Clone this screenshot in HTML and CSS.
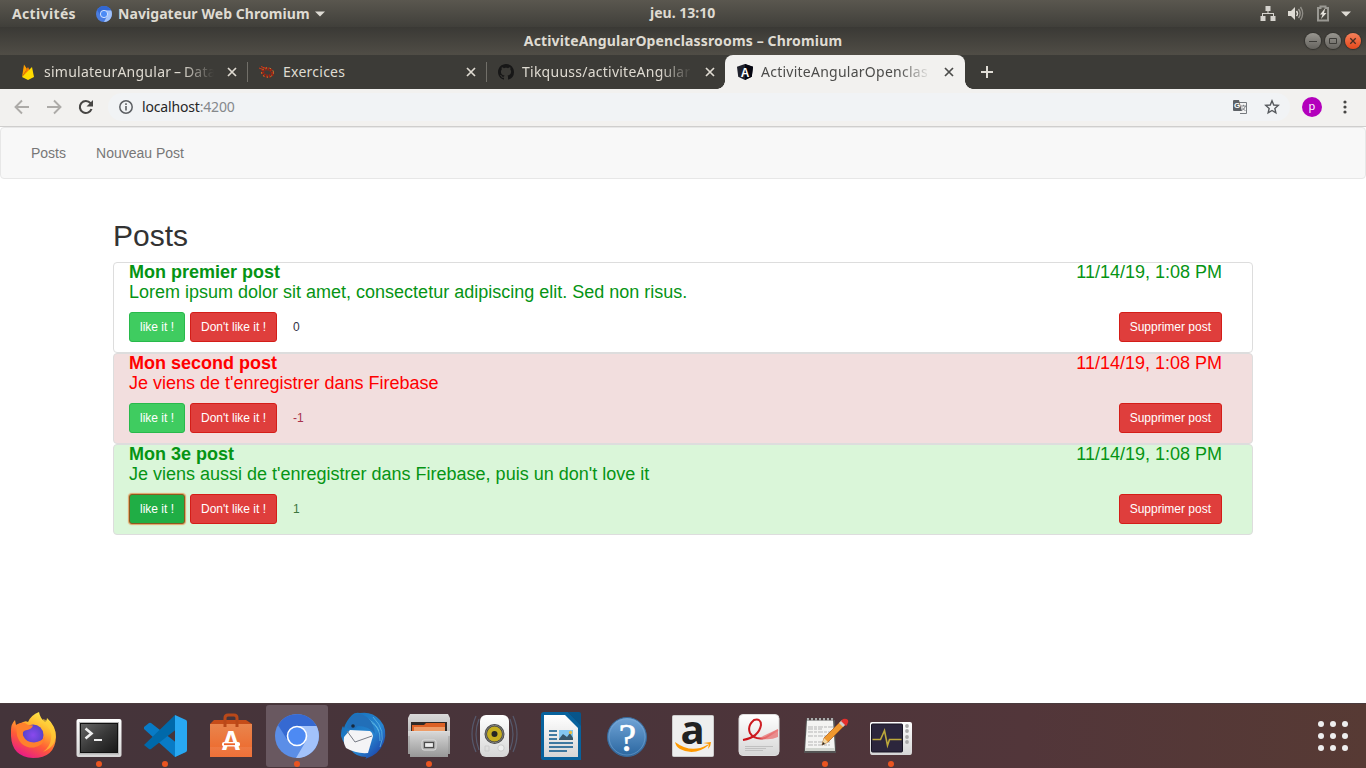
FILE: index.html
```html
<!DOCTYPE html>
<html lang="fr">
<head>
<meta charset="utf-8">
<title>ActiviteAngularOpenclassrooms</title>
<link rel="stylesheet" href="styles.css">
</head>
<body>
<header class="panel">
  <div class="panel-left">
    <span class="activities">Activités</span>
    <svg class="app-icon" width="16" height="16" viewBox="0 0 44 44"><circle cx="22" cy="22" r="22" fill="#4a7de0"/><path d="M22 12H41.500A22 22 0 0 1 22 44L30.700 27Z" fill="#a1c2fa"/><path d="M3 11A22 22 0 0 1 41.500 12H22L13 27Z" fill="#3267d1"/><circle cx="22" cy="22" r="10" fill="#4c8bf5" stroke="#dce8ff" stroke-width="2.500"/></svg>
    <span class="app-name">Navigateur Web Chromium</span>
    <svg width="10" height="6" viewBox="0 0 10 6"><path d="M0 .5H10L5 5.500Z" fill="#dedbd4"/></svg>
  </div>
  <span class="clock">jeu. 13:10</span>
  <div class="panel-right">
    <svg width="16" height="16" viewBox="0 0 16 16"><g fill="#d5d3ce"><path d="M5.500 0h5v5h-5zM.5 10h5v5h-5zM10.500 10h5v5h-5z"/><path d="M7.500 5h1v2H14v3h-1V8H3v2H2V7h5.500z"/></g></svg>
    <svg width="16" height="16" viewBox="0 0 16 16"><path d="M0 5h3l4-4v13l-4-4H0z" fill="#dedbd4"/><g fill="none" stroke="#dedbd4"><path d="M8.500 5q2 2.500 0 5" stroke-width="1.500"/><path d="M10.500 3q3.300 4.500 0 9" stroke-width="1.500" opacity=".55"/><path d="M12.500 1q4.300 6.500 0 13" opacity=".45" stroke-width="1.400"/></g></svg>
    <svg class="battery" width="14" height="17" viewBox="0 0 14 17"><path d="M2 3H4.500V1.500h5V3H12V15.500H2Z" fill="none" stroke="#999892" stroke-width="2"/><path d="M8.500 4 4 9.500H6.500L5 14l5.500-6H8L9 4z" fill="#e5e2dc"/></svg>
    <svg width="10" height="6" viewBox="0 0 10 6"><path d="M0 .5H10L5 5.500Z" fill="#dedbd4"/></svg>
  </div>
</header>

<div class="titlebar">
  <span class="window-title">ActiviteAngularOpenclassrooms – Chromium</span>
  <div class="window-buttons">
    <span class="wbtn"><svg viewBox="0 0 16 16"><path d="M4 8.500h8" stroke="#3d3c38"/></svg></span>
    <span class="wbtn"><svg viewBox="0 0 16 16"><path d="M4.500 5.500h7v5h-7z" fill="none" stroke="#3d3c38"/></svg></span>
    <span class="wbtn wbtn-close"><svg viewBox="0 0 16 16"><path d="m5.300 5.300 5.400 5.400m0-5.400-5.400 5.400" stroke="#482d22" stroke-width="1.300"/></svg></span>
  </div>
</div>

<nav class="tabs">
  <div class="tab tab-first">
    <svg width="16" height="16" viewBox="0 0 16 16"><path d="M2 13 4 .5 7 5z" fill="#ffa000"/><path d="M2 13 8 3l2 4z" fill="#f57c00"/><path d="m2 13 10-10 2 10-6 3z" fill="#ffdb00"/></svg>
    <span class="tab-title fade">simulateurAngular – Data</span>
    <svg class="close" viewBox="0 0 8 8"><path d="m0 0 8 8m0-8L0 8"/></svg>
  </div>
  <div class="tab tab-line">
    <svg width="16" height="16" viewBox="0 0 16 16"><ellipse cx="8.500" cy="8.500" rx="5" ry="3.600" transform="rotate(15 8.500 8.500)" fill="none" stroke="#a32312" stroke-width="3.200" stroke-dasharray="1.800 .9"/><ellipse cx="8.500" cy="8.500" rx="6" ry="4.600" fill="none" stroke="#e8a33a" stroke-width="1" stroke-dasharray="1.200 2.600"/><path d="M0 4 4 5.500M2 2.500l5 2" stroke="#d33a18"/></svg>
    <span class="tab-title">Exercices</span>
    <svg class="close" viewBox="0 0 8 8"><path d="m0 0 8 8m0-8L0 8"/></svg>
  </div>
  <div class="tab tab-line">
    <svg width="16" height="16" viewBox="0 0 16 16"><path fill="#171717" d="M8 0C3.580 0 0 3.580 0 8c0 3.540 2.290 6.530 5.470 7.590.4.070.55-.17.55-.38 0-.19-.01-.82-.01-1.490-2.010.37-2.530-.49-2.690-.94-.09-.23-.48-.94-.82-1.130-.28-.15-.68-.52-.01-.53.63-.01 1.080.58 1.230.82.72 1.210 1.870.87 2.330.66.07-.52.28-.87.51-1.070-1.780-.2-3.640-.89-3.640-3.950 0-.87.31-1.590.82-2.150-.08-.2-.36-1.020.08-2.120 0 0 .67-.21 2.200.82.64-.18 1.320-.27 2-.27s1.360.09 2 .27c1.530-1.040 2.200-.82 2.200-.82.44 1.100.16 1.920.08 2.120.51.56.82 1.270.82 2.150 0 3.070-1.870 3.750-3.650 3.950.29.25.54.73.54 1.480 0 1.070-.01 1.930-.01 2.200 0 .21.15.46.55.38A8.010 8.010 0 0 0 16 8c0-4.420-3.580-8-8-8Z"/></svg>
    <span class="tab-title fade">Tikquuss/activiteAngular</span>
    <svg class="close" viewBox="0 0 8 8"><path d="m0 0 8 8m0-8L0 8"/></svg>
  </div>
  <div class="tab tab-active">
    <svg width="16" height="16" viewBox="0 0 16 16"><path d="M8 0 16 2.700l-1.200 10L8 16 1.200 12.700 0 2.700z" fill="#20212c"/><path d="m8 0 8 2.700-1.200 10L8 16z" fill="#050611"/><text x="8" y="12.500" class="angular-letter">A</text></svg>
    <span class="tab-title fade">ActiviteAngularOpenclas</span>
    <svg class="close" viewBox="0 0 8 8"><path d="m0 0 8 8m0-8L0 8"/></svg>
  </div>
  <svg class="new-tab" width="12" height="12" viewBox="0 0 12 12"><path d="M6 0v12M0 6h12" stroke="#e0ddd6" stroke-width="2"/></svg>
</nav>

<div class="toolbar">
  <svg class="nav-icon" width="16" height="16" viewBox="0 0 16 16"><path d="M15 8H2m6-6.500L1.500 8 8 14.500" fill="none" stroke="#adaba8" stroke-width="1.900"/></svg>
  <svg class="nav-icon" width="16" height="16" viewBox="0 0 16 16"><path d="M1 8h13M8 1.500 14.500 8 8 14.500" fill="none" stroke="#adaba8" stroke-width="1.900"/></svg>
  <svg class="nav-icon" width="16" height="16" viewBox="0 0 16 16"><path d="M13.500 10A6 6 0 1 1 12.500 4.200L14 6" fill="none" stroke="#474644" stroke-width="2.100"/><path d="M15 1v6.500H8.500z" fill="#474644"/></svg>
  <div class="omnibox">
    <svg width="14" height="14" viewBox="0 0 14 14"><circle cx="7" cy="7" r="6.200" fill="none" stroke="#5c5f63" stroke-width="1.500"/><path d="M7 6v4.500M7 3.300v1.600" stroke="#5c5f63" stroke-width="1.600"/></svg>
    <span class="url">localhost<span class="port">:4200</span></span>
    <svg class="translate" width="14" height="14" viewBox="0 0 14 14"><path d="M6 2.500h7.500v11H7" fill="#f4f4f4" stroke="#777b80"/><path d="M0 1q0-1 1-1h5l3 11H1q-1 0-1-1z" fill="#5d6166"/><text x="1" y="8.300" class="tr-g">G</text><path d="M8 6h5m-2.500-1.200V6m2 0q-1 3.500-4 4.500M9 7.500l3.500 3.500" fill="none" stroke="#777b80" stroke-width=".9"/></svg>
    <svg width="16" height="16" viewBox="0 0 16 16"><path d="m8 1.800 1.750 4.200 4.500.4-3.400 3 1 4.400L8 11.500l-3.850 2.300 1-4.400-3.400-3 4.500-.4z" fill="none" stroke="#55585c" stroke-width="1.400"/></svg>
  </div>
  <span class="avatar">p</span>
  <svg class="menu-dots" width="4" height="14" viewBox="0 0 4 14"><g fill="#474644"><circle cx="2" cy="2" r="1.600"/><circle cx="2" cy="7" r="1.600"/><circle cx="2" cy="12" r="1.600"/></g></svg>
</div>

<main class="page">
  <nav class="navbar"><a>Posts</a><a>Nouveau Post</a></nav>
  <div class="container">
    <h2>Posts</h2>
    <article class="post">
      <div class="post-head"><strong>Mon premier post</strong><span>11/14/19, 1:08 PM</span></div>
      <p>Lorem ipsum dolor sit amet, consectetur adipiscing elit. Sed non risus.</p>
      <div class="actions"><button class="btn like">like it !</button><button class="btn danger">Don't like it !</button><span class="count">0</span><button class="btn danger remove">Supprimer post</button></div>
    </article>
    <article class="post disliked">
      <div class="post-head"><strong>Mon second post</strong><span>11/14/19, 1:08 PM</span></div>
      <p>Je viens de t'enregistrer dans Firebase</p>
      <div class="actions"><button class="btn like">like it !</button><button class="btn danger">Don't like it !</button><span class="count">-1</span><button class="btn danger remove">Supprimer post</button></div>
    </article>
    <article class="post liked">
      <div class="post-head"><strong>Mon 3e post</strong><span>11/14/19, 1:08 PM</span></div>
      <p>Je viens aussi de t'enregistrer dans Firebase, puis un don't love it</p>
      <div class="actions"><button class="btn like focused">like it !</button><button class="btn danger">Don't like it !</button><span class="count">1</span><button class="btn danger remove">Supprimer post</button></div>
    </article>
  </div>
</main>

<footer class="dock">
  <svg width="0" height="0" class="defs"><defs>
    <linearGradient id="ff" x1=".8" y1="0" x2=".3" y2="1"><stop offset="0" stop-color="#fff44f"/><stop offset=".35" stop-color="#ffb52e"/><stop offset=".65" stop-color="#ff5d36"/><stop offset="1" stop-color="#e8188a"/></linearGradient>
    <radialGradient id="ffb"><stop offset="0" stop-color="#8a49ee"/><stop offset="1" stop-color="#5843c9"/></radialGradient>
    <linearGradient id="term" x1="0" y1="0" x2="1" y2="1"><stop offset="0" stop-color="#666"/><stop offset=".5" stop-color="#393939"/><stop offset="1" stop-color="#171717"/></linearGradient>
    <linearGradient id="bag" x1="0" y1="0" x2="0" y2="1"><stop offset="0" stop-color="#e9854d"/><stop offset="1" stop-color="#ee6528"/></linearGradient>
    <linearGradient id="tb" x1="0" y1="0" x2="1" y2="1"><stop offset="0" stop-color="#146eb8"/><stop offset=".6" stop-color="#2684d0"/><stop offset="1" stop-color="#1b2d9b"/></linearGradient>
    <linearGradient id="metal" x1="0" y1="0" x2="0" y2="1"><stop offset="0" stop-color="#d9d9d9"/><stop offset="1" stop-color="#979797"/></linearGradient>
    <linearGradient id="help" x1="0" y1="0" x2="0" y2="1"><stop offset="0" stop-color="#70a4d7"/><stop offset="1" stop-color="#2a669f"/></linearGradient>
    <linearGradient id="white" x1="0" y1="0" x2="0" y2="1"><stop offset="0" stop-color="#fff"/><stop offset="1" stop-color="#d6d6d6"/></linearGradient>
    <linearGradient id="swoosh" x1="0" y1="0" x2="1" y2="0"><stop offset="0" stop-color="#c90e15"/><stop offset=".6" stop-color="#d0242a"/><stop offset="1" stop-color="#f3a09f"/></linearGradient>
  </defs></svg>
  <span class="launcher"><svg viewBox="0 0 66 65"><path d="M11 27q0-6 4-10l1 5 4-1q5-4 8-2 3-7 11-10 1 6 6 10 2-1 2-4 9 8 9 19-1 21-23 21Q12 54 11 33z" fill="url(#ff)"/><circle cx="33" cy="32" r="10.500" fill="url(#ffb)"/><path d="M16 22q7-5 12 0l5 .5q-1 4-8 5-3 1-2 5 3 7 11 7 8-1 11-6-1 9-11 11-13 1-17-12z" fill="#ff812d"/><path d="M43 19q10 8 8 17-1 8-8 13 15-6 12-21-4-11-12-12z" fill="#ffcf38" opacity=".65"/></svg></span>
  <span class="launcher running"><svg viewBox="0 0 66 65"><rect x="10.500" y="16" width="45" height="38" rx="2" fill="url(#white)"/><rect x="13" y="19" width="40" height="32.500" fill="#b5b5b5"/><rect x="14.500" y="20.500" width="37" height="29" fill="url(#term)" stroke="#111"/><path d="m18.500 25.500 6 5-6 5" transform="translate(1 0)" fill="none" stroke="#eee" stroke-width="2.600"/><path d="M28 37h8" stroke="#eee" stroke-width="2"/></svg></span>
  <span class="launcher running"><svg viewBox="0 0 66 65"><path d="m12 24 5-4q1-.5 2 0l36 28-12 6-31-28z" fill="#087bc6"/><path d="m12 42 31-30 3 13-27 21q-1 .7-2 0l-5-4z" fill="#0069aa"/><path d="m43 12 11 5q1 .5 1 2v28q0 1-1 2l-11 5z" fill="#28a8f2"/></svg></span>
  <span class="launcher"><svg viewBox="0 0 66 65"><path d="m12 21 4-4h32l6 4z" fill="#c54c19"/><path d="M12 21h42v33H12z" fill="url(#bag)"/><path d="M12 44h42v10H12z" fill="#fff" opacity=".08"/><path d="M27 24V15q0-3 3-3h6q3 0 3 3v9" fill="none" stroke="#b94819" stroke-width="3"/><text x="33" y="46.500" class="software-letter">A</text><rect x="24" y="39" width="18" height="4.500" rx="2" fill="#fff"/><path d="M26 41.200h11" stroke="#ee6429" stroke-width="1.800"/></svg></span>
  <span class="launcher running active"><svg viewBox="0 0 66 65"><circle cx="33" cy="33" r="22" fill="#5b8ee7"/><path d="M14 22A22 22 0 0 1 52.500 23H33L24 38z" fill="#3569d2"/><path d="M33 23h19.500A22 22 0 0 1 32 55l10-17z" fill="#a2c2fa"/><circle cx="33" cy="33" r="9.500" fill="#4d8af3" stroke="#fff" stroke-width="1.600"/></svg></span>
  <span class="launcher"><svg viewBox="0 0 66 65"><path d="M22 12q3-3 8-2 12-2 20 7 8 9 4 22-5 13-19 17 2-2 1-2-10 0-15-7-8-6-10-14 0-7 2-10l1 2q2-7 8-13z" fill="url(#tb)"/><path d="M32 19q11-3 17 9M38 16q13 7 12 22M43 14q14 14 7 30" stroke="#65bfe8" fill="none" opacity=".7"/><path d="m14 34 6-7 20 1q3 2 3 5l-5 17q-12 1-22-5-3-5-2-11z" fill="#f4f4f6"/><path d="m17 28 8 11 17-6" fill="none" stroke="#777b85"/><path d="M17 25q1-13 13-14 13 3 15 20-6-8-17-8-5 5-11 2z" fill="#226fb8"/><circle cx="23" cy="23" r="1.800" fill="#172a3d"/></svg></span>
  <span class="launcher running"><svg viewBox="0 0 66 65"><path d="M14 11h38l2 4v36H12V15z" fill="url(#metal)"/><path d="M15 19h36v10H15z" fill="#302a27"/><path d="M16 22h12l2-2h19v9H16z" fill="#dc6125"/><path d="M18 25h31M18 27h31" stroke="#ffd8aa"/><path d="M12 28h42v5h-2v21H14V33h-2z" fill="url(#metal)"/><path d="M14 28.500h38" stroke="#ddd"/><rect x="26" y="37" width="14" height="10" rx="2" fill="#aaa" stroke="#ddd"/><rect x="28.500" y="39.500" width="9" height="5" fill="#eee" stroke="#4c4c4c" stroke-width="1.200"/></svg></span>
  <span class="launcher"><svg viewBox="0 0 66 65"><g fill="none" stroke="#6990b8" stroke-width="1.200" opacity=".4"><path d="M17 16q-6 15 0 31M14 13q-8 18 0 36M48 16q6 15 0 31M51 13q8 18 0 36"/></g><rect x="18" y="12" width="29" height="42" rx="6" fill="url(#white)"/><circle cx="32.500" cy="31" r="10" fill="#444"/><circle cx="32.500" cy="31" r="7.500" fill="#c6ae20"/><circle cx="32.500" cy="31" r="3" fill="#252525"/><circle cx="32.500" cy="31" r="8.700" fill="none" stroke="#aaa" stroke-width=".6"/><circle cx="39" cy="45" r="3.200" fill="#eee" stroke="#ccc"/><path d="M23 43h4v5h-4z" fill="none" stroke="#ccc"/></svg></span>
  <span class="launcher"><svg viewBox="0 0 66 65"><path d="M16 9h24l13 13v35H15q-2 0-2-2V12q0-3 3-3z" fill="#07629d"/><path d="M40 9h11q2 0 2 2v12z" fill="#07558a"/><path d="M16 12h21l13 13v29H16z" fill="url(#white)"/><path d="M21 28h8M21 32h8M21 36h8M21 40h24M21 44h24M21 48h18" stroke="#07558a" stroke-width="1.600"/><path d="M31 27h14v10H31z" fill="#83c7ef"/><path d="m31 36 4-5 4 3 3-4 3 5v2H31z" fill="#385768"/><circle cx="42.500" cy="29.500" r="1.700" fill="#e7bc42"/></svg></span>
  <span class="launcher"><svg viewBox="0 0 66 65"><circle cx="33" cy="34" r="19.500" fill="url(#help)" stroke="#386a9b"/><circle cx="33" cy="34" r="18" fill="none" stroke="#82aed8" opacity=".5"/><text x="33.500" y="47.500" class="help-mark">?</text></svg></span>
  <span class="launcher"><svg viewBox="0 0 66 65"><rect x="12.500" y="12.500" width="41" height="41" rx="1" fill="#eee" stroke="#ccc"/><text x="32.500" y="41" class="amazon-letter">a</text><path d="M15 39q16 12 32 3l3-1q-15 13-30 5-4-2-5-7z" fill="#ff9900"/><path d="m43 40 8-1q0 4-3 7l1-5z" fill="#ff9900"/></svg></span>
  <span class="launcher"><svg viewBox="0 0 66 65"><rect x="13" y="11.500" width="40" height="41" rx="4" fill="url(#white)" stroke="#ddd"/><path d="M17 37q16-3 18-15 0-7-7-5-7 6-4 13 4 7 15 5l13-8" fill="none" stroke="url(#swoosh)" stroke-width="2"/><path d="m33 35 19-9v8q-9 4-19 1z" fill="#e97575" opacity=".8"/><path d="M19 43.500h28M19 45.500h21M19 47.500h18" stroke="#c0c0c0"/></svg></span>
  <span class="launcher running"><svg viewBox="0 0 66 65"><path d="M14 17h29l1 33H12z" fill="#555"/><path d="M15 17h26l2 31H13z" fill="#f4f4f2"/><path d="M13 45h30v3H13z" fill="#d1d5cf"/><path d="M16 18v-3m4 3v-3m4 3v-3m4 3v-3m4 3v-3m4 3v-3m4 3v-3" stroke="#4b4b4b" stroke-width="3"/><path d="M16 18v-3m4 3v-3m4 3v-3m4 3v-3m4 3v-3m4 3v-3m4 3v-3" stroke="#eee" stroke-width="1.200"/><path d="M16 24h25M16 29h23M16 33h19M16 39h22M16 42h22M16 26h14" stroke="#b5b5b5" stroke-dasharray="5 1 3 1"/><path d="m30 42 2-7 17-17 4 4-17 17z" fill="#ef982e" stroke="#aa5b18" stroke-width=".7"/><path d="m47 20 3-3 4 4-3 3z" fill="#ccc"/><path d="m49 18 2-2q3-1 5 1 1 2-1 5l-1 1z" fill="#e4302d"/><path d="m32 35 4 4-6 3z" fill="#f3d7a3"/><path d="m30 42 1-3 2 2z" fill="#222"/></svg></span>
  <span class="launcher running"><svg viewBox="0 0 66 65"><path d="M14 19h38q2 0 2 2v28q0 3-2 3H14q-2 0-2-3V21q0-2 2-2z" fill="url(#white)"/><rect x="13.500" y="21" width="31" height="28" rx="1" fill="#2c263c" stroke="#161322"/><path d="M14.500 36.500h8l4-9 3 15 2-6h12" fill="none" stroke="#bda93b" stroke-width="1.600"/><g fill="#aaa"><circle cx="49" cy="23" r="1.900"/><circle cx="49" cy="28" r="1.900"/><circle cx="49" cy="34" r="1.900"/><circle cx="49" cy="39" r="1.900"/></g></svg></span>
  <svg class="apps-grid" width="30" height="30" viewBox="0 0 30 30"><g fill="#eee"><circle cx="3" cy="3" r="3"/><circle cx="15" cy="3" r="3"/><circle cx="27" cy="3" r="3"/><circle cx="3" cy="15" r="3"/><circle cx="15" cy="15" r="3"/><circle cx="27" cy="15" r="3"/><circle cx="3" cy="27" r="3"/><circle cx="15" cy="27" r="3"/><circle cx="27" cy="27" r="3"/></g></svg>
</footer>
</body>
</html>
```
FILE: styles.css
```css
* { box-sizing: border-box; }
body { margin: 0; width: 1366px; height: 768px; overflow: hidden; display: flex; flex-direction: column; background: #fff; font-family: "Liberation Sans", Arial, sans-serif; }
svg { display: block; flex: none; }
.panel, .titlebar, .tabs, .toolbar { font-family: "Noto Sans", "Open Sans", sans-serif; flex: none; }

.panel { height: 27px; display: grid; grid-template-columns: 1fr auto 1fr; align-items: center; background: linear-gradient(#5a574f, #403f3a); color: #dfdbd2; font-size: 14px; font-weight: 700; line-height: 27px; white-space: nowrap; }
.panel-left { display: flex; align-items: center; padding-left: 12px; }
.activities { width: 84px; letter-spacing: .35px; }
.app-icon { margin-right: 6px; }
.app-name { width: 197px; letter-spacing: .07px; }
.clock { width: 66px; line-height: 25px; padding-bottom: 2px; }
.panel-right { display: flex; align-items: center; justify-content: flex-end; padding-right: 15px; gap: 12px; }
.battery { margin-right: -1px; }

.titlebar { height: 28px; display: grid; grid-template-columns: 1fr auto 1fr; background: linear-gradient(#3a3935, #504d46); color: #dfdbd2; line-height: 28px; font-size: 14px; font-weight: 700; }
.window-title { grid-column: 2; white-space: nowrap; letter-spacing: .15px; }
.window-buttons { display: flex; justify-content: flex-end; align-items: center; gap: 4px; padding-right: 5px; }
.wbtn { width: 16px; height: 16px; border-radius: 50%; background: linear-gradient(#989690, #65635e); box-shadow: 0 0 1px 1px #33322e; }
.wbtn-close { background: linear-gradient(#f5815b, #e6481b); }

.tabs { height: 34px; background: #3c3b37; display: flex; align-items: center; color: #dfdbd2; font-size: 14px; }
.tab { height: 34px; width: 239px; display: flex; align-items: center; padding: 0 11px 0 12px; gap: 8px; }
.tab-first { width: 247px; padding-left: 20px; }
.tab-line { background: linear-gradient(#716f69, #716f69) left 7px / 1px 20px no-repeat; }
.tab-title { flex: 1; min-width: 0; white-space: nowrap; line-height: 34px; letter-spacing: .25px; word-spacing: -1.2px; }
.fade { mask-image: linear-gradient(to right, #000 calc(100% - 38px), transparent calc(100% - 6px)); }
.close { width: 8px; height: 8px; overflow: visible; }
.close path { fill: none; stroke: #dfdbd2; stroke-width: 1.7; }
.tab-active { position: relative; width: 240px; color: #4c4c4a; background: #f2f1ef; border-radius: 8px 8px 0 0; padding-right: 12px; }
.tab-active::before, .tab-active::after { content: ""; position: absolute; bottom: 0; width: 8px; height: 8px; }
.tab-active::before { left: -8px; background: radial-gradient(circle at 0 0, transparent 7.5px, #f2f1ef 8px); }
.tab-active::after { right: -8px; background: radial-gradient(circle at 100% 0, transparent 7.5px, #f2f1ef 8px); }
.tab-active .close path { stroke: #4c4c4a; }
.new-tab { margin-left: 16px; }
.angular-letter { font: 700 12px "Liberation Sans", sans-serif; fill: #fff; text-anchor: middle; }

.toolbar { height: 38px; background: #f2f1ef; border-bottom: 1px solid #cfcecd; display: flex; align-items: center; padding: 0 19px 1px 14px; }
.nav-icon { margin-right: 16px; }
.omnibox { height: 28px; width: 1182px; flex: none; margin-left: -2px; border-radius: 14px; background: #f1f3f5; display: flex; align-items: center; padding: 0 10px 0 11px; font-size: 14px; }
.url { flex: 1; margin-left: 9px; padding-bottom: 2px; color: #272727; letter-spacing: -.17px; }
.port { color: #85888b; }
.translate { margin-right: 17px; }
.tr-g { font: 700 8px "Liberation Sans", sans-serif; fill: #fff; }
.avatar { width: 20px; height: 20px; margin-left: 12px; border-radius: 50%; background: #b300bc; color: #fff; font-size: 11px; line-height: 18px; text-align: center; }
.menu-dots { margin-left: auto; }

.page { flex: 1; min-height: 0; }
.navbar { height: 52px; border: 1px solid #e7e7e7; border-radius: 4px; background: #f8f8f8; display: flex; align-items: center; gap: 30px; padding-left: 30px; font-size: 14px; line-height: 20px; color: #777; }
.container { width: 1140px; margin: 40px auto 0; }
h2 { margin: 0 0 10px; font-size: 30px; line-height: 33px; font-weight: 500; color: #333; }
.post { height: 91px; border: 1px solid #ddd; border-radius: 4px; padding: 0 30px 0 15px; color: #069414; font-size: 18px; line-height: 19.8px; background: #fff; }
.post-head { display: flex; justify-content: space-between; }
.post p { margin: 0 0 9.4px; }
.actions { display: flex; align-items: center; gap: 5px; }
.btn { height: 30px; padding: 5px 10px; border: 1px solid; border-radius: 3px; font: 12px/18px "Liberation Sans", Arial, sans-serif; color: #fff; white-space: nowrap; }
.like { background: #3fcc60; border-color: #28b94b; }
.danger { background: #df3e3c; border-color: #d41d18; }
.focused { background: #20ae45; border-color: #8a5a20; box-shadow: 0 0 1px 1px #e2a268; }
.count { margin-left: 11px; font-size: 12px; line-height: 18px; color: #333344; }
.remove { margin-left: auto; }
.disliked { color: #ff0000; background: #f2dede; }
.disliked .count { color: #a9324c; }
.liked { background: #daf6d9; }
.liked .count { color: #3c763d; }

.dock { height: 65px; flex: none; display: flex; background: linear-gradient(90deg, #44343a, #4a343a 45%, #52363a 75%, #573a34); border-top: 1px solid #4a3b3d; }
.defs { position: absolute; }
.launcher { position: relative; width: 66px; height: 65px; margin-top: -1px; flex: none; }
.launcher > svg { position: relative; width: 66px; height: 65px; }
.running::after { content: ""; position: absolute; left: 30px; top: 58px; width: 6px; height: 6px; border-radius: 50%; background: #e95420; }
.active::before { content: ""; position: absolute; left: 2px; top: 2px; width: 62px; height: 62px; border-radius: 3px; background: #695860; }
.software-letter { font: 700 26px "Open Sans", sans-serif; fill: #fff; text-anchor: middle; }
.help-mark { font: 400 39px "Liberation Serif", serif; fill: #fff; stroke: #fff; stroke-width: .6px; text-anchor: middle; }
.amazon-letter { font: 700 40px "Open Sans", sans-serif; fill: #222; text-anchor: middle; }
.apps-grid { margin: 17px 18px 0 auto; }
```
